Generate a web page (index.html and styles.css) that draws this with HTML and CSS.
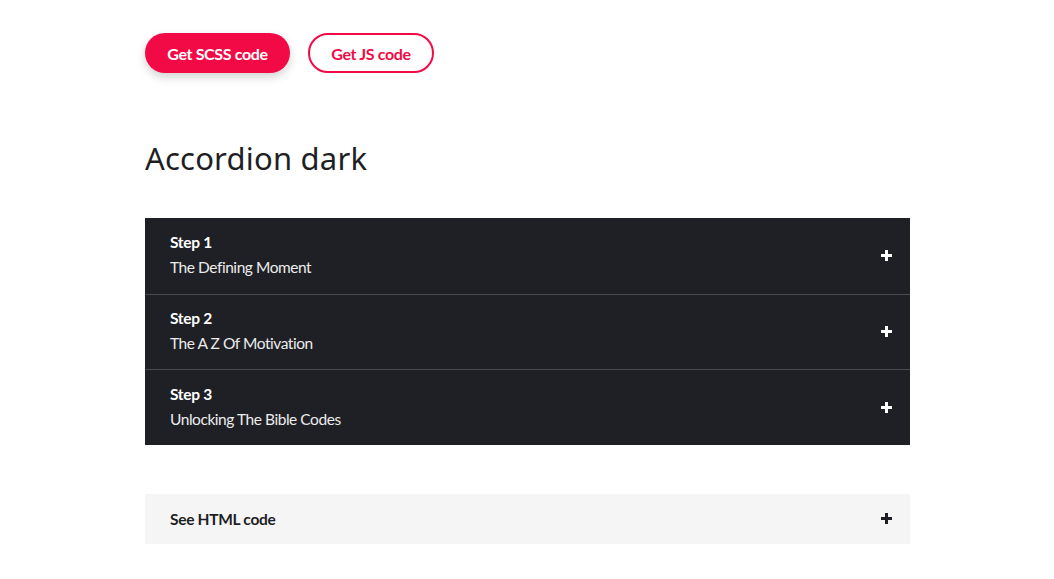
FILE: index.html
```html
<!DOCTYPE html>
<html lang="en">
<head>
<meta charset="utf-8">
<title>Accordion dark</title>
<link rel="stylesheet" href="styles.css">
</head>
<body>
<main class="page">
  <div class="actions">
    <button class="btn btn-solid">Get SCSS code</button>
    <button class="btn btn-outline">Get JS code</button>
  </div>
  <h1 class="title">Accordion dark</h1>
  <div class="accordion">
    <div class="acc-item">
      <div class="acc-text">
        <div class="acc-step">Step 1</div>
        <div class="acc-sub">The Defining Moment</div>
      </div>
      <span class="plus"></span>
    </div>
    <div class="acc-item">
      <div class="acc-text">
        <div class="acc-step">Step 2</div>
        <div class="acc-sub">The A Z Of Motivation</div>
      </div>
      <span class="plus"></span>
    </div>
    <div class="acc-item">
      <div class="acc-text">
        <div class="acc-step">Step 3</div>
        <div class="acc-sub">Unlocking The Bible Codes</div>
      </div>
      <span class="plus"></span>
    </div>
  </div>
  <div class="code-toggle">
    <span class="code-label">See HTML code</span>
    <span class="plus plus-dark"></span>
  </div>
</main>
</body>
</html>
```

FILE: styles.css
```css
* { box-sizing: border-box; }
html, body { margin: 0; padding: 0; background: #fff; }
body { font-family: Lato, "Noto Sans", sans-serif; color: #1e1f24; }

.page {
  width: 765px;
  margin-left: 145px;
  padding-top: 33px;
}

.actions {
  display: flex;
  gap: 18px;
}

.btn {
  height: 40px;
  border-radius: 20px;
  font-family: Lato, sans-serif;
  font-size: 16px;
  font-weight: 700;
  letter-spacing: -0.35px;
  cursor: pointer;
  padding: 0;
}
.btn-solid {
  width: 145px;
  background: #f20a46;
  color: #fff;
  border: none;
  box-shadow: 0 4px 10px rgba(0,0,0,0.18);
}
.btn-outline {
  width: 126px;
  background: #fff;
  color: #f20a46;
  border: 2px solid #f20a46;
}

.title {
  margin: 62px 0 0;
  font-family: "Noto Sans", sans-serif;
  font-weight: 400;
  font-size: 31px;
  line-height: 46px;
  letter-spacing: 0.2px;
  color: #1e1f24;
}

.accordion {
  margin-top: 37px;
  background: #1f2025;
}

.acc-item {
  height: 75.5px;
  display: flex;
  align-items: center;
  justify-content: space-between;
  padding: 0 18px 0 25px;
  border-top: 1px solid #4b4c50;
  color: #fff;
}
.acc-item:first-child { border-top: none; }

.acc-text { padding-bottom: 1px; }

.acc-step {
  font-size: 15.5px;
  font-weight: 700;
  letter-spacing: -0.3px;
  line-height: 25px;
}
.acc-sub {
  font-size: 15.5px;
  line-height: 25px;
  letter-spacing: -0.45px;
  color: #ececec;
}

.plus {
  position: relative;
  width: 11px;
  height: 11px;
  flex: none;
}
.plus::before, .plus::after {
  content: "";
  position: absolute;
  background: #fff;
}
.plus::before { left: 0; top: 4px; width: 11px; height: 3px; }
.plus::after { left: 4px; top: 0; width: 3px; height: 11px; }
.plus-dark::before, .plus-dark::after { background: #1e1f24; }

.code-toggle {
  margin-top: 49px;
  height: 50px;
  background: #f5f5f5;
  display: flex;
  align-items: center;
  justify-content: space-between;
  padding: 0 18px 0 25px;
}
.code-label {
  font-size: 15.5px;
  font-weight: 700;
  letter-spacing: -0.3px;
  color: #1e1f24;
}
```
